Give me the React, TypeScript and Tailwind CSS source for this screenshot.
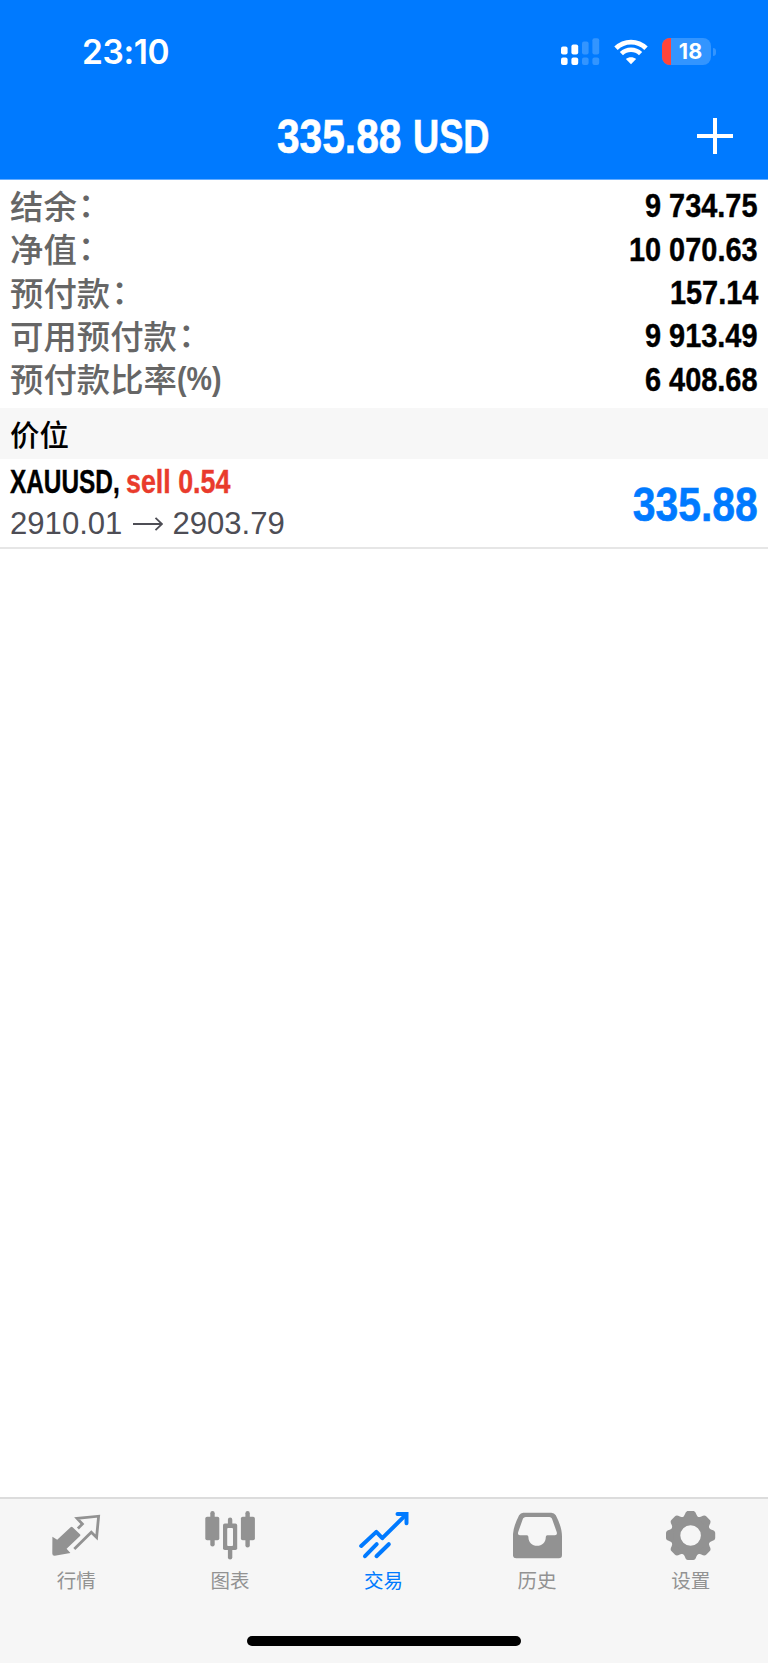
import React from 'react';
import clsx from 'clsx';

const summary = [
  { label: '结余', suffix: '：', value: '9 734.75' },
  { label: '净值', suffix: '：', value: '10 070.63' },
  { label: '预付款', suffix: '：', value: '157.14' },
  { label: '可用预付款', suffix: '：', value: '9 913.49' },
  { label: '预付款比率', suffix: '(%)', value: '6 408.68' },
];

const SignalIcon = () => (
  <svg width="39" height="28" viewBox="0 0 39 28" fill="#fff">
    <rect x="0" y="8.5" width="6.6" height="8" rx="2" />
    <rect x="10.4" y="6.5" width="6.8" height="10" rx="2" />
    <rect x="0" y="19.5" width="6.6" height="7.5" rx="2" />
    <rect x="10.4" y="19.5" width="6.8" height="7.5" rx="2" />
    <g opacity="0.2">
      <rect x="21" y="3.5" width="6.6" height="13" rx="2" />
      <rect x="31.4" y="0.3" width="6.8" height="16.2" rx="2" />
      <rect x="21" y="19.5" width="6.6" height="7.5" rx="2" />
      <rect x="31.4" y="19.5" width="6.8" height="7.5" rx="2" />
    </g>
  </svg>
);

const WifiIcon = () => (
  <svg width="34" height="26" viewBox="0 0 34 26" fill="none" stroke="#fff">
    <path d="M2 9.3C10.2 1 23.8 1 32 9.3" strokeWidth="4.8" />
    <path d="M7.4 14.6C12.8 9.4 21.2 9.4 26.6 14.6" strokeWidth="4.6" />
    <path d="M17 25.2 11.9 20c2.8-2.5 7.4-2.5 10.2 0Z" fill="#fff" stroke="none" />
  </svg>
);

const QuotesIcon = () => (
  <svg width="50" height="50" viewBox="0.6 0 50 50" fill="none">
    <path
      d="M1 25.7 5.8 28.8 19.2 16.2Q20.2 15.2 21.2 16.2L28.8 23.4Q29.4 24.2 28.6 25L15.2 37.8 19 42 3.4 44.8Q0.9 45 0.9 42.6Z"
      fill="#929292"
    />
    <path d="M26.5 17.5 31 13 25.7 7.4 47.2 5.2 45.2 26.4 39.9 21.2 22.9 38" stroke="#929292" strokeWidth="2.8" />
  </svg>
);

const ChartIcon = () => (
  <svg width="50" height="50" viewBox="0 0.7 50 50" fill="#929292">
    <rect x="5.3" y="0.7" width="4.4" height="35.5" rx="2.2" />
    <rect x="0.3" y="6.5" width="14" height="23.5" rx="1.8" />
    <rect x="40.4" y="0.7" width="4.4" height="36.5" rx="2.2" />
    <rect x="35.9" y="6.5" width="14" height="23.5" rx="1.8" />
    <rect x="22.9" y="7.2" width="4.4" height="42" rx="2.2" />
    <rect x="18" y="13.3" width="14.2" height="26.5" rx="1.8" />
    <rect x="22.2" y="17.7" width="5.8" height="18" rx="1" fill="#f6f6f6" />
  </svg>
);

const TradeIcon = () => (
  <svg width="50" height="50" viewBox="0 0.3 50 50" fill="none" stroke="#007aff" strokeWidth="4" strokeLinecap="round">
    <path d="M2.2 35.3 17.3 21.2 23.3 27.5 46 5" strokeLinejoin="round" />
    <path d="M38.5 3.2H47.5V12.5" strokeLinejoin="miter" />
    <path d="M6 45.5 17.7 33.5M17.5 45.5 29.8 33.5" />
  </svg>
);

const HistoryIcon = () => (
  <svg width="50" height="50" viewBox="0.4 0.5 50 50" fill="#929292">
    <path
      fillRule="evenodd"
      d="M10.7 2.2H38.7Q41.7 2.2 43.2 4.8C47 12 49.4 19 49.4 26V44.5Q49.4 47.7 46.2 47.7H3.5Q0.3 47.7 0.3 44.5V26C0.3 19 2.7 12 6.5 4.8Q8 2.2 10.7 2.2ZM13 6.4Q11.3 6.4 10.4 8L5.6 21.5Q4.7 24.7 7.3 24.7H14.3Q15.8 24.7 15.8 26.5C15.8 32 19.7 35.3 24.5 35.3S33.2 32 33.2 26.5Q33.2 24.7 34.7 24.7H42.3Q45 24.7 44.1 21.5L39.3 8Q38.6 6.4 36.9 6.4Z"
    />
  </svg>
);

const SettingsIcon = () => (
  <svg width="50" height="50" viewBox="-24.6 -24.5 50 50" fill="#929292">
    <circle r="15.2" fill="none" stroke="#929292" strokeWidth="9.8" />
    {[0, 45, 90, 135, 180, 225, 270, 315].map((angle) => (
      <path
        key={angle}
        transform={`rotate(${angle})`}
        d="M-8.6-17.5Q-6.6-18.7-5.8-21Q-4.8-24.6-2.6-24.6H2.6Q4.8-24.6 5.8-21Q6.6-18.7 8.6-17.5Z"
      />
    ))}
  </svg>
);

const tabs = [
  { label: '行情', icon: QuotesIcon },
  { label: '图表', icon: ChartIcon },
  { label: '交易', icon: TradeIcon, active: true },
  { label: '历史', icon: HistoryIcon },
  { label: '设置', icon: SettingsIcon },
];

const Header = () => (
  <header className="h-[180px] border-b border-[#66adff] bg-[#007aff] text-white">
    <div className="flex h-[103px] items-center justify-between pr-[52px] pl-[82px]">
      <span className="pt-[2px] font-[Inter,sans-serif] text-[33.5px] leading-none font-semibold tracking-[-0.4px]">23:10</span>
      <div className="flex items-center">
        <SignalIcon />
        <div className="mr-[14px] ml-[14px]">
          <WifiIcon />
        </div>
        <div className="relative flex h-[27px] w-[49px] items-center justify-center overflow-hidden rounded-[8px] bg-[#3395ff]">
          <div className="absolute inset-y-0 left-0 w-[9px] bg-[#ff453a]" />
          <span className="pl-[8px] font-[Inter,sans-serif] text-[21.5px] leading-none font-bold">18</span>
        </div>
        <div className="ml-[2px] h-[8px] w-[3px] rounded-r-full bg-[#3395ff]" />
      </div>
    </div>
    <div className="grid h-[66px] grid-cols-[1fr_auto_1fr] items-center">
      <span />
      <h1 className="flex w-[214px] pt-px text-[49px] leading-none font-bold whitespace-nowrap [-webkit-text-stroke:0.6px_currentColor]">
        <span className="w-[136px] origin-left scale-x-[0.83]">335.88</span>
        <span className="w-[78px] origin-left scale-x-[0.74]">USD</span>
      </h1>
      <svg className="mr-[35px] justify-self-end" width="36" height="36" viewBox="0 0 36 36" stroke="#fff" strokeWidth="4">
        <path d="M18 0V36M0 18H36" />
      </svg>
    </div>
  </header>
);

const App = () => {
  return (
    <div className="flex h-[1663px] w-[768px] flex-col bg-white font-['Liberation_Sans','Noto_Sans_CJK_SC',sans-serif]">
      <Header />

      {/* Account summary */}
      <section className="h-[228px] px-[10px] pt-[4px]">
        {summary.map((row) => (
          <div key={row.label} className="flex h-[43.3px] items-center justify-between">
            <div className="flex items-center pb-[2px] text-[#666]">
              <span className="font-['Noto_Sans_CJK_SC',sans-serif] text-[33.4px] leading-none font-medium">{row.label}</span>
              {row.suffix === '：' ? (
                <span className="pb-[4px] pl-px font-['Noto_Sans_CJK_SC',sans-serif] text-[33.4px] leading-none font-medium">：</span>
              ) : (
                <span className="origin-left scale-x-[0.88] pt-[2px] text-[32.5px] leading-none font-bold">{row.suffix}</span>
              )}
            </div>
            <span className="origin-right scale-x-[0.89] pt-[2px] text-[32.5px] leading-none font-bold text-black [-webkit-text-stroke:0.4px_currentColor]">
              {row.value}
            </span>
          </div>
        ))}
      </section>

      <h2 className="flex h-[51px] items-center bg-[#f7f7f7] pl-[10px] font-['Noto_Sans_CJK_SC',sans-serif] text-[29.5px] leading-none font-medium">
        价位
      </h2>

      {/* Open position */}
      <div className="flex h-[90px] items-center justify-between border-b-2 border-[#e6e6e6] px-[10px]">
        <div>
          <div className="flex h-[42px] items-center pt-px text-[32.5px] font-bold whitespace-nowrap text-black [-webkit-text-stroke:0.4px_currentColor]">
            <span className="w-[116px] origin-left scale-x-[0.75]">XAUUSD,</span>
            <span className="w-[120px] origin-left scale-x-[0.825] text-[#e93b2c]">sell 0.54</span>
          </div>
          <div className="flex h-[42px] items-center text-[31.1px] text-[#4d4d55]">
            2910.01
            <svg className="mr-[9px] ml-[11px]" width="30" height="14" viewBox="0 0 30 14" fill="none" stroke="#4d4d55" strokeWidth="1.8">
              <path d="M0 7H29M22.5 0.8 29 7 22.5 13.2" />
            </svg>
            2903.79
          </div>
        </div>
        <span className="origin-right scale-x-[0.835] pt-[3px] text-[49px] leading-none font-bold text-[#007aff] [-webkit-text-stroke:0.6px_currentColor]">
          335.88
        </span>
      </div>

      <main className="flex-1" />

      {/* Tab bar */}
      <nav className="h-[166px] border-t-2 border-[#dcdcdc] bg-[#f6f6f6]">
        <div className="grid h-[137px] grid-cols-5 pt-[12px]">
          {tabs.map(({ label, icon: Icon, active }) => (
            <div key={label} className={clsx('flex flex-col items-center', active ? 'text-[#007aff]' : 'text-[#929292]')}>
              <Icon />
              <span className="mt-[9px] pr-px font-['Noto_Sans_CJK_SC',sans-serif] text-[19.5px] leading-none">{label}</span>
            </div>
          ))}
        </div>
        <div className="mx-auto h-[10px] w-[274px] rounded-full bg-black" />
      </nav>
    </div>
  );
};

export default App;
